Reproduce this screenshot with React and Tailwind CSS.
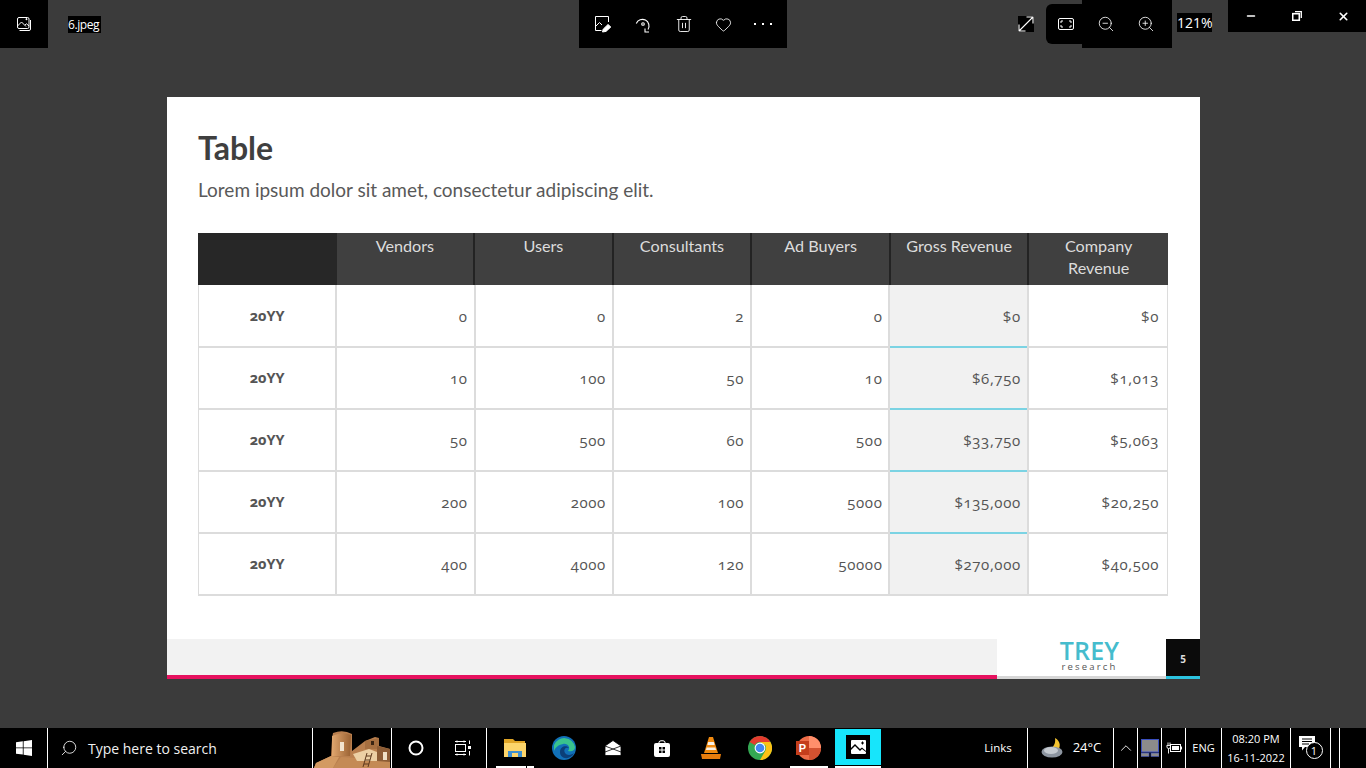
import React from 'react';
import { Search, Trash2, Heart, ZoomIn, ZoomOut, Minus, X, ChevronUp } from 'lucide-react';

const headers = ['Vendors', 'Users', 'Consultants', 'Ad Buyers', 'Gross Revenue', 'Company Revenue'];

const rows = [
  ['0', '0', '2', '0', '$0', '$0'],
  ['10', '100', '50', '10', '$6,750', '$1,013'],
  ['50', '500', '60', '500', '$33,750', '$5,063'],
  ['200', '2000', '100', '5000', '$135,000', '$20,250'],
  ['400', '4000', '120', '50000', '$270,000', '$40,500'],
];

const PhotosIcon = ({ size = 16 }) => (
  <svg width={size} height={size} viewBox="0 0 16 16" fill="none" stroke="currentColor" strokeWidth="1">
    <rect x="1.5" y="1.5" width="11.5" height="11" rx="1.5" />
    <path d="M1.5 10 L5.5 6 L10 10.5 M9 9 L10.5 7.8 L13 10" />
    <path d="M3.5 14.5 H13 A1.5 1.5 0 0 0 14.5 13 V4" />
    <path d="M9.5 3.2 h2 M10.5 2.2 v2" />
  </svg>
);

const PhotosFilled = () => (
  <svg width="15" height="14" viewBox="0 0 15 14">
    <rect width="15" height="14" rx="1" fill="#fff" />
    <path d="M0 8 L4 4 L9 9 L11 7.5 L15 11 V12 L11 9 L9 11 L4 6 L0 10 Z" fill="#000" />
    <path d="M10 3 h3 M11.5 1.5 v3" stroke="#000" />
  </svg>
);

const EditIcon = () => (
  <svg width="17" height="17" viewBox="0 0 17 17" fill="none" stroke="currentColor" strokeWidth="1">
    <path d="M6.5 14.5 H.5 V.5 H13.5 V6" />
    <path d="M.5 10.5 L4.5 6.5 L7 9" />
    <path d="M7.5 16 L8.2 13.2 L13 8.5 L15.8 11 L11 15.4 Z" fill="currentColor" />
  </svg>
);

const RotateIcon = () => (
  <svg width="17" height="17" viewBox="0 0 17 17" fill="none" stroke="currentColor" strokeWidth="1.1">
    <path d="M1.3 7.5 A6.6 6.6 0 1 1 13 13.5" />
    <circle cx="8" cy="8" r="1.3" />
    <path d="M10 12.5 V16 H14" />
  </svg>
);

const ExpandIcon = () => (
  <svg width="16" height="16" viewBox="0 0 16 16" fill="none" stroke="currentColor" strokeWidth="1.1">
    <path d="M1 15 L15 1 M8.5 1 H15 V7.5 M1 8.5 V15 H7.5" />
  </svg>
);

const FitIcon = () => (
  <svg width="16" height="12" viewBox="0 0 16 12" fill="none" stroke="currentColor" strokeWidth="1">
    <rect x="0.5" y="0.5" width="15" height="11" rx="1.5" />
    <path d="M3 5 V3 H5 M11 3 H13 V5 M13 7 V9 H11 M5 9 H3 V7" />
  </svg>
);

const RestoreIcon = () => (
  <svg width="10" height="10" viewBox="0 0 10 10" fill="none" stroke="currentColor" strokeWidth="1.3">
    <rect x="0.7" y="2.7" width="6.6" height="6.6" strokeWidth="1.6" />
    <path d="M3 .7 H9.3 V7" />
  </svg>
);

const WindowsLogo = () => (
  <svg width="16" height="16" viewBox="0 0 16 16" fill="#fff">
    <path d="M0 2.3 L6.8 1.3 V7.5 H0 Z M7.6 1.2 L16 0 V7.5 H7.6 Z M0 8.3 H6.8 V14.6 L0 13.7 Z M7.6 8.3 H16 V16 L7.6 14.8 Z" />
  </svg>
);

const Adobe = () => (
  <svg width="78" height="39" viewBox="0 0 78 39">
    <defs>
      <linearGradient id="wall" x1="0" x2="1" y1="0" y2="0">
        <stop offset="0" stopColor="#e0a66e" />
        <stop offset="1" stopColor="#9a6233" />
      </linearGradient>
    </defs>
    <rect width="78" height="39" fill="#000" />
    <path d="M1 39 L3 34 L18 27 L19 10 L20 4 Q30 0 39 5 V22 L52 12 L62 8 L66 9 V17 L77 20 V39 Z" fill="#b97f4e" />
    <path d="M19 7 Q30 2 38 6 L37 27 L19 27 Z" fill="url(#wall)" />
    <path d="M1 39 L3 34 L18 27 L26 28 L20 39 Z" fill="#d39a62" />
    <path d="M20 39 L28 28 L60 30 L77 32 V39 Z" fill="#c48a55" />
    <path d="M40 25 L56 20 L64 23 L64 32 L44 32 Z" fill="#ecd0a4" />
    <path d="M52 12 L66 9 V20 L52 20 Z" fill="#a66f40" />
    <path d="M64 17 L77 20 V33 L64 32 Z" fill="#8c5c35" />
    <rect x="27" y="13" width="4" height="9" fill="#f2e4cf" />
    <rect x="70" y="23" width="4" height="8" fill="#efe0c6" />
    <rect x="58" y="12" width="3" height="4" fill="#3a2412" />
    <path d="M50 38 L54 24 M55 38 L59 24 M51 35 H56 M52 31 H57 M53 27 H58" stroke="#5f3a1e" strokeWidth="1" />
  </svg>
);

const CortanaRing = () => (
  <svg width="16" height="16" viewBox="0 0 16 16" fill="none" stroke="#fff" strokeWidth="2">
    <circle cx="8" cy="8" r="6.5" />
  </svg>
);

const TaskView = () => (
  <svg width="18" height="16" viewBox="0 0 18 16" fill="none" stroke="#fff" strokeWidth="1">
    <path d="M1 1.5 H12 M1 14.5 H12 M3 .5 V2.5 M10 .5 V2.5 M3 13.5 V15.5 M10 13.5 V15.5" />
    <rect x="1.5" y="4.5" width="10" height="7" />
    <rect x="14" y="6" width="3" height="3" fill="#fff" stroke="none" />
    <path d="M15.5 .5 V4 M15.5 11 V15.5" />
  </svg>
);

const Explorer = () => (
  <svg width="22" height="20" viewBox="0 0 22 20">
    <path d="M0 1 H9 L11 3 H21 V7 H0 Z" fill="#e0a526" />
    <path d="M0 5 H22 V19 H0 Z" fill="#fcd56b" />
    <rect x="4" y="13" width="14" height="6" fill="#3d8fd0" />
    <rect x="8" y="15" width="6" height="4" fill="#fcd56b" />
  </svg>
);

const Edge = () => (
  <svg width="24" height="24" viewBox="0 0 24 24">
    <circle cx="12" cy="12" r="12" fill="#1170b8" />
    <path d="M2 9 A11 11 0 0 1 23 11 C23 15 19 16 16 15 C19 12 16 7 11 8 C6 9 3 12 2 15 Z" fill="#39c38d" />
    <path d="M8 16 C8 10 15 9 17 12 C14 11 11 13 13 17 C15 20 20 19 22 17 C19 24 8 24 8 16 Z" fill="#0b3f78" />
  </svg>
);

const Mail = () => (
  <svg width="16" height="16" viewBox="0 0 16 16" fill="#fff" stroke="#000" strokeWidth="0.8">
    <path d="M0 6 L8 .5 L16 6 V15.5 H0 Z" />
    <path d="M0 6 L16 12 M16 6 L0 12" fill="none" />
  </svg>
);

const Store = () => (
  <svg width="16" height="17" viewBox="0 0 16 17">
    <path d="M5 4 V2 Q5 .7 8 .7 Q11 .7 11 2 V4" stroke="#fff" fill="none" />
    <rect y="3" width="16" height="14" rx="2" fill="#fff" />
    <path d="M5 7 H7.5 V9.5 H5 Z M8.5 7 H11 V9.5 H8.5 Z M5 10.5 H7.5 V13 H5 Z M8.5 10.5 H11 V13 H8.5 Z" fill="#000" />
  </svg>
);

const Vlc = () => (
  <svg width="20" height="22" viewBox="0 0 20 22">
    <path d="M8 0 H12 L17 16 H3 Z" fill="#f08a10" />
    <path d="M7.2 5 H12.8 L13.6 8 H6.4 Z M5.6 10.5 H14.4 L15 13 H5 Z" fill="#f5f0e8" />
    <path d="M0 17 H20 L19 22 H1 Z" fill="#e87d0d" />
  </svg>
);

const Chrome = () => (
  <svg width="24" height="24" viewBox="0 0 24 24">
    <circle cx="12" cy="12" r="12" fill="#34a853" />
    <path d="M12 0 A12 12 0 0 1 22.4 6 H12 A6 6 0 0 0 6.8 9 L1.6 6 A12 12 0 0 1 12 0 Z" fill="#e33b2e" />
    <path d="M22.4 6 A12 12 0 0 1 12 24 L17.2 15 A6 6 0 0 0 17.2 9 L12 6 Z" fill="#fbc116" />
    <circle cx="12" cy="12" r="5.4" fill="#fff" />
    <circle cx="12" cy="12" r="4.3" fill="#4285f4" />
  </svg>
);

const Powerpoint = () => (
  <div className="relative w-[25px] h-[24px]">
    <svg width="25" height="24" viewBox="0 0 25 24" className="absolute top-0 left-0">
      <circle cx="13" cy="12" r="12" fill="#ed6c47" />
      <path d="M13 0 A12 12 0 0 1 25 12 H13 Z" fill="#ff8f6b" />
      <path d="M13 12 H25 A12 12 0 0 1 13 24 Z" fill="#d35230" />
    </svg>
    <div className="absolute top-[5px] left-0 w-[13px] h-[14px] bg-[#c43e1c] text-white text-[11px] font-bold leading-[14px] text-center font-['Liberation_Sans',sans-serif]">P</div>
  </div>
);

const Moon = () => (
  <svg width="24" height="22" viewBox="0 0 24 22">
    <path d="M15 1 C21 4 21 11 17 14 L8 13 C13 11 16 7 15 1 Z" fill="#f2c230" />
    <ellipse cx="12" cy="15" rx="10.5" ry="5.5" fill="#8d95a0" />
    <ellipse cx="11" cy="13.5" rx="7" ry="3.5" fill="#c5cad0" />
  </svg>
);

const Monitor = () => (
  <svg width="18" height="18" viewBox="0 0 18 18">
    <rect x="0.5" y="0.5" width="17" height="12.5" fill="#8b8b8b" stroke="#3a4fbf" />
    <rect x="0" y="14" width="8" height="3.5" fill="#8b8b8b" stroke="#3a4fbf" strokeWidth="0.6" />
    <rect x="10" y="14" width="8" height="3.5" fill="#8b8b8b" stroke="#3a4fbf" strokeWidth="0.6" />
  </svg>
);

const Battery = () => (
  <svg width="16" height="12" viewBox="0 0 16 12" fill="none" stroke="#fff">
    <rect x="4.5" y="2.5" width="10" height="7" />
    <rect x="6" y="4" width="7" height="4" fill="#fff" stroke="none" />
    <path d="M15.5 4.5 V7.5" />
    <path d="M2 .5 V3 M4 .5 V3 M.8 3.5 H4.5 V5 Q4.5 6.5 2.5 6.5 Q1 6.5 1 5 Z M2.5 6.5 V11.5" strokeWidth="0.9" />
  </svg>
);

const Notes = () => (
  <div className="relative w-[24px] h-[24px]">
    <svg width="16" height="15" viewBox="0 0 16 15" className="absolute top-0 left-0">
      <path d="M0 0 H16 V11 H6 L3 14.5 V11 H0 Z" fill="#fff" />
      <path d="M3 3 H13 M3 5.5 H13 M3 8 H10" stroke="#000" />
    </svg>
    <div className="absolute left-[7px] top-[6px] w-[17px] h-[17px] rounded-full border border-white bg-black text-white text-[11px] leading-[15px] text-center">1</div>
  </div>
);

const TopBar = () => (
  <div className="h-[48px] shrink-0 flex items-start text-white">
    <div className="w-[48px] h-[48px] shrink-0 bg-black flex items-center justify-center">
      <PhotosIcon />
    </div>
    <div className="ml-[20px] mt-[16px] h-[17px] w-[33px] shrink-0 bg-black text-[12px] tracking-[-0.4px] leading-[17px] whitespace-nowrap">6.jpeg</div>
    <div className="ml-[478px] w-[208px] h-[48px] shrink-0 bg-black flex items-center pl-[16px]">
      <div className="w-[40px] flex justify-start"><EditIcon /></div>
      <div className="w-[40px] flex justify-start"><RotateIcon /></div>
      <div className="w-[40px] flex justify-start"><Trash2 size={18} strokeWidth={1.2} /></div>
      <div className="w-[40px] flex justify-start"><Heart size={17} strokeWidth={1.2} /></div>
      <div className="flex gap-[6px] -ml-[1px]">
        <span className="w-[2px] h-[2px] bg-white" />
        <span className="w-[2px] h-[2px] bg-white" />
        <span className="w-[2px] h-[2px] bg-white" />
      </div>
    </div>
    <div className="ml-[231px] mt-[16px] w-[16px] h-[16px] shrink-0 bg-black"><ExpandIcon /></div>
    <div className="ml-[12px] mt-[4px] w-[36px] h-[40px] shrink-0 bg-black rounded-l-md flex items-center justify-center pl-[4px]"><FitIcon /></div>
    <div className="w-[90px] h-[48px] shrink-0 bg-black flex items-center justify-center gap-[22px] pr-[2px]">
      <ZoomOut size={18} strokeWidth={1.1} />
      <ZoomIn size={18} strokeWidth={1.1} />
    </div>
    <div className="ml-[5px] mt-[13px] w-[35px] h-[19px] shrink-0 bg-black text-[14px] leading-[19px] whitespace-nowrap">121%</div>
    <div className="ml-[16px] w-[138px] h-[32px] shrink-0 bg-black flex items-center">
      <div className="w-[46px] flex justify-center"><Minus size={12} strokeWidth={3} /></div>
      <div className="w-[46px] flex justify-center"><RestoreIcon /></div>
      <div className="w-[46px] flex justify-center"><X size={13} strokeWidth={3} /></div>
    </div>
  </div>
);

const DataTable = () => (
  <div className="mx-[31px] mt-[30px] w-[970px] font-['Open_Sans',sans-serif]">
    <div className="grid grid-cols-7 h-[52px] text-[16.2px] leading-[22px] text-[#dcdcdc] font-['Lato',sans-serif]">
      <div className="bg-[#272727]" />
      {headers.map((h, i) => (
        <div key={h} className={i === 5
          ? 'bg-[#404040] text-center pt-[2px] px-[14px]'
          : 'bg-[#404040] border-r-2 border-[#232323] text-center pt-[2px] px-[8px] whitespace-nowrap'}>{h}</div>
      ))}
    </div>
    <div className="border-x border-b-2 border-[#dcdcdc]">
      {rows.map((row, i) => (
        <div key={i} className="grid grid-cols-7 h-[62px] first:h-[63px] border-b-2 border-[#dcdcdc] last:border-b-0 last:h-[60px]">
          <div className="border-r-2 border-[#dcdcdc] flex items-center justify-center text-[14.5px] font-bold text-[#555555] oldstyle-nums">20YY</div>
          {row.map((v, j) => (
            <div
              key={j}
              className={j === 4
                ? 'relative bg-[#f1f1f1] border-r-2 border-[#dcdcdc] flex items-center justify-end pr-[6px] pt-[1px] text-[15px] tracking-[0.6px] text-[#555555] oldstyle-nums'
                : j === 5
                  ? 'flex items-center justify-end pr-[8px] pt-[1px] text-[15px] tracking-[0.6px] text-[#555555] oldstyle-nums'
                  : 'border-r-2 border-[#dcdcdc] flex items-center justify-end pr-[6px] pt-[1px] text-[15px] tracking-[0.6px] text-[#555555] oldstyle-nums'}
            >
              {v}
              {j === 4 && i < 4 && <span className="absolute left-0 right-0 -bottom-[2px] h-[2px] bg-[#7bd3e3]" />}
            </div>
          ))}
        </div>
      ))}
    </div>
  </div>
);

const Slide = () => (
  <div className="mt-[49px] ml-[167px] w-[1033px] h-[582px] bg-white flex flex-col">
    <div className="pl-[31px] pt-[29px] font-['Lato',sans-serif]">
      <h1 className="text-[32px] leading-[44px] font-bold text-[#3f3f3f]">Table</h1>
      <p className="mt-[7px] text-[19px] leading-[26px] text-[#595959]">Lorem ipsum dolor sit amet, consectetur adipiscing elit.</p>
    </div>
    <DataTable />
    <div className="mt-auto flex h-[40px]">
      <div className="w-[830px] bg-[#f2f2f2] flex flex-col justify-end">
        <div className="h-[4px] bg-[#e6125f]" />
      </div>
      <div className="w-[169px] bg-white flex flex-col">
        <div className="flex-1 flex flex-col items-center pl-[16px] font-['Open_Sans',sans-serif]">
          <span className="text-[25px] leading-[21px] mt-[1px] font-semibold text-[#45bccd] tracking-[0.2px]">TREY</span>
          <span className="text-[9.5px] leading-[10px] mt-[1px] tracking-[2.2px] font-medium text-[#555555]">research</span>
        </div>
        <div className="h-[3px] bg-[#d6d6d6]" />
      </div>
      <div className="w-[34px] bg-[#0b0b0b] flex flex-col">
        <div className="flex-1 flex items-center justify-center text-[10px] font-bold text-[#dddddd] font-['Open_Sans',sans-serif] pt-[3px]">5</div>
        <div className="h-[3px] bg-[#2cc3e0]" />
      </div>
    </div>
  </div>
);

const Cell = ({ w, children, className = '' }) => (
  <div style={{ width: w }} className={`h-full shrink-0 border-r border-white flex items-center justify-center ${className}`}>{children}</div>
);

const AppIcon = ({ children, marks }) => (
  <div className="relative w-[49px] h-full flex items-center justify-center">
    {children}
    {marks}
  </div>
);

const Taskbar = () => (
  <div className="h-[40px] shrink-0 mt-auto bg-black text-white flex font-['Open_Sans',sans-serif]">
    <Cell w={48}><WindowsLogo /></Cell>
    <Cell w={265} className="!justify-start pl-[12px] gap-[10px]">
      <Search size={18} strokeWidth={1.1} className="-scale-x-100" />
      <span className="text-[14px] text-[#f0f0f0] whitespace-nowrap">Type here to search</span>
    </Cell>
    <Cell w={79} className="items-end"><Adobe /></Cell>
    <Cell w={48}><CortanaRing /></Cell>
    <Cell w={47}><TaskView /></Cell>
    <div className="flex items-center pl-[3px] w-[482px] shrink-0">
      <AppIcon marks={<><span className="absolute bottom-0 left-[6px] w-[30px] h-[2px] bg-white" /><span className="absolute bottom-0 left-[37px] w-[7px] h-[2px] bg-white" /></>}><Explorer /></AppIcon>
      <AppIcon><Edge /></AppIcon>
      <AppIcon><Mail /></AppIcon>
      <AppIcon><Store /></AppIcon>
      <AppIcon><Vlc /></AppIcon>
      <AppIcon><Chrome /></AppIcon>
      <AppIcon marks={<span className="absolute bottom-0 left-[6px] w-[38px] h-[2px] bg-white" />}><Powerpoint /></AppIcon>
      <div className="relative w-[46px] h-full ml-[2px] pt-[1px]">
        <div className="h-[36px] bg-[#17e5fb] flex items-center justify-center">
          <div className="w-[24px] h-[24px] bg-black flex items-center justify-center"><PhotosFilled /></div>
        </div>
        <span className="absolute bottom-0 left-0 right-0 h-[2px] bg-white" />
      </div>
    </div>
    <Cell w={59} className="text-[11.5px]">Links</Cell>
    <Cell w={86} className="gap-[9px]"><Moon /><span className="text-[13px]">24°C</span></Cell>
    <Cell w={24}><ChevronUp size={18} strokeWidth={1.2} /></Cell>
    <Cell w={24}><Monitor /></Cell>
    <Cell w={24}><Battery /></Cell>
    <Cell w={36} className="text-[11px]">ENG</Cell>
    <Cell w={69} className="flex-col text-[11px] leading-[19px]"><span>08:20 PM</span><span>16-11-2022</span></Cell>
    <Cell w={40}><Notes /></Cell>
    <Cell w={9} />
    <div className="flex-1" />
  </div>
);

export default function App() {
  return (
    <div className="h-screen bg-[#3b3b3b] flex flex-col overflow-hidden font-['Open_Sans',sans-serif]">
      <TopBar />
      <Slide />
      <Taskbar />
    </div>
  );
}
